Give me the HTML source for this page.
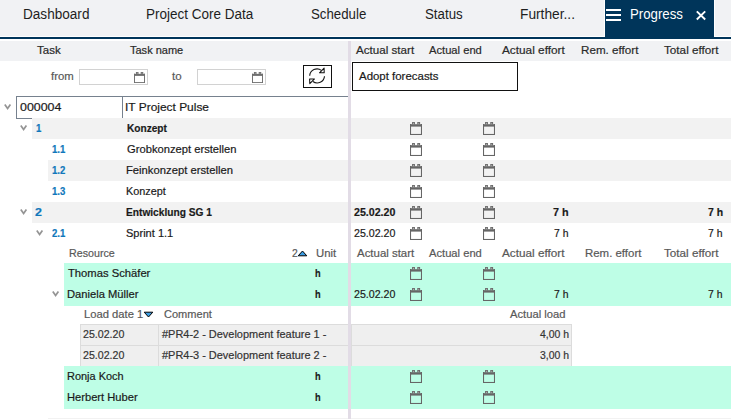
<!DOCTYPE html>
<html><head><meta charset="utf-8"><style>
html,body{margin:0;padding:0;width:731px;height:419px;overflow:hidden;background:#fff;position:relative}
.t{position:absolute;font-family:"Liberation Sans",sans-serif;white-space:pre;transform-origin:0 0;}
.s{-webkit-text-stroke:0.2px currentColor}
.b{position:absolute}
svg{position:absolute;overflow:visible}
</style></head><body>
<div class="b" style="left:0px;top:0px;width:731px;height:36px;background:#f1f2f4;"></div>
<div class="b" style="left:0px;top:36px;width:731px;height:1px;background:#ffffff;"></div>
<div class="b" style="left:604px;top:0px;width:1px;height:36px;background:#ffffff;"></div>
<div class="b" style="left:714px;top:0px;width:1px;height:36px;background:#ffffff;"></div>
<div class="b" style="left:605px;top:0px;width:109px;height:37px;background:#00355a;"></div>
<div class="b" style="left:0px;top:37px;width:731px;height:2px;background:#00355a;"></div>
<div class="b" style="left:0px;top:41px;width:731px;height:20px;background:#f1f2f4;"></div>
<div class="b" style="left:606px;top:9px;width:14.5px;height:2px;background:#ffffff;"></div>
<div class="b" style="left:606px;top:14px;width:14.5px;height:2px;background:#ffffff;"></div>
<div class="b" style="left:606px;top:19px;width:14.5px;height:2px;background:#ffffff;"></div>
<svg style="left:696px;top:11px" width="10" height="10" viewBox="0 0 10 10"><path d="M0.8 0.4 L9.2 8.5 M9.2 0.4 L0.8 8.5" stroke="#fff" stroke-width="1.9"/></svg>
<div class="b" style="left:79px;top:69px;width:69px;height:16px;background:#fff;box-sizing:border-box;border:1px solid #d2d2d2"></div>
<svg style="left:134px;top:72px" width="11" height="11" viewBox="0 0 12 13" preserveAspectRatio="none"><g fill="#6e6e6e"><rect x="2.1" y="0" width="2.8" height="2.4"/><rect x="7.3" y="0" width="2.8" height="2.4"/><rect x="0" y="2.2" width="12" height="2.4"/><rect x="0" y="2" width="1.05" height="11"/><rect x="10.95" y="2" width="1.05" height="11"/><rect x="0" y="11.95" width="12" height="1.05"/></g><g fill="#aaa"><rect x="3" y="0.8" width="1" height="1.4"/><rect x="8.2" y="0.8" width="1" height="1.4"/></g></svg>
<div class="b" style="left:197px;top:69px;width:69px;height:16px;background:#fff;box-sizing:border-box;border:1px solid #d2d2d2"></div>
<svg style="left:252px;top:72px" width="11" height="11" viewBox="0 0 12 13" preserveAspectRatio="none"><g fill="#6e6e6e"><rect x="2.1" y="0" width="2.8" height="2.4"/><rect x="7.3" y="0" width="2.8" height="2.4"/><rect x="0" y="2.2" width="12" height="2.4"/><rect x="0" y="2" width="1.05" height="11"/><rect x="10.95" y="2" width="1.05" height="11"/><rect x="0" y="11.95" width="12" height="1.05"/></g><g fill="#aaa"><rect x="3" y="0.8" width="1" height="1.4"/><rect x="8.2" y="0.8" width="1" height="1.4"/></g></svg>
<div class="b" style="left:303px;top:65px;width:29px;height:23px;background:#fff;box-sizing:border-box;border:1px solid #111"></div>
<svg style="left:303px;top:65px" width="29" height="23" viewBox="0 0 29 23"><g fill="none" stroke="#1a1a1a" stroke-width="1.15"><path d="M6.7 10.8 A7.3 7.3 0 0 1 18.4 5.4"/><path d="M21.5 11.2 A7.3 7.3 0 0 1 9.9 16.5"/></g><g fill="#fff" stroke="#111" stroke-width="1.05" stroke-linejoin="round"><path d="M16.5 7.8 L21.2 7.8 L21.1 3.1 Z"/><path d="M6.6 13.9 L11.5 13.9 L6.8 18.6 Z"/></g></svg>
<div class="b" style="left:352px;top:62px;width:166px;height:29px;background:#fff;box-sizing:border-box;border:1px solid #111"></div>
<div class="b" style="left:16px;top:96px;width:333px;height:23px;background:#fff;box-sizing:border-box;border:1px solid #76818e;border-right:none"></div>
<div class="b" style="left:122px;top:97px;width:1px;height:21px;background:#76818e;"></div>
<svg style="left:4px;top:104px" width="8" height="7" viewBox="0 0 8 7"><path d="M0.8 0.5 L3.6 4.6 L6.4 0.5" fill="none" stroke="#949494" stroke-width="1.7"/></svg>
<div class="b" style="left:32px;top:118px;width:316px;height:21px;background:#f2f2f2;"></div>
<div class="b" style="left:351px;top:118px;width:380px;height:21px;background:#f2f2f2;"></div>
<div class="b" style="left:48px;top:160px;width:300px;height:21px;background:#f2f2f2;"></div>
<div class="b" style="left:351px;top:160px;width:380px;height:21px;background:#f2f2f2;"></div>
<div class="b" style="left:32px;top:202px;width:316px;height:21px;background:#f2f2f2;"></div>
<div class="b" style="left:351px;top:202px;width:380px;height:21px;background:#f2f2f2;"></div>
<svg style="left:20px;top:125px" width="8" height="7" viewBox="0 0 8 7"><path d="M0.8 0.5 L3.6 4.6 L6.4 0.5" fill="none" stroke="#949494" stroke-width="1.7"/></svg>
<svg style="left:20px;top:209px" width="8" height="7" viewBox="0 0 8 7"><path d="M0.8 0.5 L3.6 4.6 L6.4 0.5" fill="none" stroke="#949494" stroke-width="1.7"/></svg>
<svg style="left:36px;top:230px" width="8" height="7" viewBox="0 0 8 7"><path d="M0.8 0.5 L3.6 4.6 L6.4 0.5" fill="none" stroke="#949494" stroke-width="1.7"/></svg>
<svg style="left:410px;top:122px" width="12" height="13" viewBox="0 0 12 13" preserveAspectRatio="none"><g fill="#666666"><rect x="2.1" y="0" width="2.8" height="2.4"/><rect x="7.3" y="0" width="2.8" height="2.4"/><rect x="0" y="2.2" width="12" height="2.4"/><rect x="0" y="2" width="1.05" height="11"/><rect x="10.95" y="2" width="1.05" height="11"/><rect x="0" y="11.95" width="12" height="1.05"/></g><g fill="#aaa"><rect x="3" y="0.8" width="1" height="1.4"/><rect x="8.2" y="0.8" width="1" height="1.4"/></g></svg>
<svg style="left:483px;top:122px" width="12" height="13" viewBox="0 0 12 13" preserveAspectRatio="none"><g fill="#666666"><rect x="2.1" y="0" width="2.8" height="2.4"/><rect x="7.3" y="0" width="2.8" height="2.4"/><rect x="0" y="2.2" width="12" height="2.4"/><rect x="0" y="2" width="1.05" height="11"/><rect x="10.95" y="2" width="1.05" height="11"/><rect x="0" y="11.95" width="12" height="1.05"/></g><g fill="#aaa"><rect x="3" y="0.8" width="1" height="1.4"/><rect x="8.2" y="0.8" width="1" height="1.4"/></g></svg>
<svg style="left:410px;top:143px" width="12" height="13" viewBox="0 0 12 13" preserveAspectRatio="none"><g fill="#666666"><rect x="2.1" y="0" width="2.8" height="2.4"/><rect x="7.3" y="0" width="2.8" height="2.4"/><rect x="0" y="2.2" width="12" height="2.4"/><rect x="0" y="2" width="1.05" height="11"/><rect x="10.95" y="2" width="1.05" height="11"/><rect x="0" y="11.95" width="12" height="1.05"/></g><g fill="#aaa"><rect x="3" y="0.8" width="1" height="1.4"/><rect x="8.2" y="0.8" width="1" height="1.4"/></g></svg>
<svg style="left:483px;top:143px" width="12" height="13" viewBox="0 0 12 13" preserveAspectRatio="none"><g fill="#666666"><rect x="2.1" y="0" width="2.8" height="2.4"/><rect x="7.3" y="0" width="2.8" height="2.4"/><rect x="0" y="2.2" width="12" height="2.4"/><rect x="0" y="2" width="1.05" height="11"/><rect x="10.95" y="2" width="1.05" height="11"/><rect x="0" y="11.95" width="12" height="1.05"/></g><g fill="#aaa"><rect x="3" y="0.8" width="1" height="1.4"/><rect x="8.2" y="0.8" width="1" height="1.4"/></g></svg>
<svg style="left:410px;top:164px" width="12" height="13" viewBox="0 0 12 13" preserveAspectRatio="none"><g fill="#666666"><rect x="2.1" y="0" width="2.8" height="2.4"/><rect x="7.3" y="0" width="2.8" height="2.4"/><rect x="0" y="2.2" width="12" height="2.4"/><rect x="0" y="2" width="1.05" height="11"/><rect x="10.95" y="2" width="1.05" height="11"/><rect x="0" y="11.95" width="12" height="1.05"/></g><g fill="#aaa"><rect x="3" y="0.8" width="1" height="1.4"/><rect x="8.2" y="0.8" width="1" height="1.4"/></g></svg>
<svg style="left:483px;top:164px" width="12" height="13" viewBox="0 0 12 13" preserveAspectRatio="none"><g fill="#666666"><rect x="2.1" y="0" width="2.8" height="2.4"/><rect x="7.3" y="0" width="2.8" height="2.4"/><rect x="0" y="2.2" width="12" height="2.4"/><rect x="0" y="2" width="1.05" height="11"/><rect x="10.95" y="2" width="1.05" height="11"/><rect x="0" y="11.95" width="12" height="1.05"/></g><g fill="#aaa"><rect x="3" y="0.8" width="1" height="1.4"/><rect x="8.2" y="0.8" width="1" height="1.4"/></g></svg>
<svg style="left:410px;top:185px" width="12" height="13" viewBox="0 0 12 13" preserveAspectRatio="none"><g fill="#666666"><rect x="2.1" y="0" width="2.8" height="2.4"/><rect x="7.3" y="0" width="2.8" height="2.4"/><rect x="0" y="2.2" width="12" height="2.4"/><rect x="0" y="2" width="1.05" height="11"/><rect x="10.95" y="2" width="1.05" height="11"/><rect x="0" y="11.95" width="12" height="1.05"/></g><g fill="#aaa"><rect x="3" y="0.8" width="1" height="1.4"/><rect x="8.2" y="0.8" width="1" height="1.4"/></g></svg>
<svg style="left:483px;top:185px" width="12" height="13" viewBox="0 0 12 13" preserveAspectRatio="none"><g fill="#666666"><rect x="2.1" y="0" width="2.8" height="2.4"/><rect x="7.3" y="0" width="2.8" height="2.4"/><rect x="0" y="2.2" width="12" height="2.4"/><rect x="0" y="2" width="1.05" height="11"/><rect x="10.95" y="2" width="1.05" height="11"/><rect x="0" y="11.95" width="12" height="1.05"/></g><g fill="#aaa"><rect x="3" y="0.8" width="1" height="1.4"/><rect x="8.2" y="0.8" width="1" height="1.4"/></g></svg>
<svg style="left:410px;top:206px" width="12" height="13" viewBox="0 0 12 13" preserveAspectRatio="none"><g fill="#666666"><rect x="2.1" y="0" width="2.8" height="2.4"/><rect x="7.3" y="0" width="2.8" height="2.4"/><rect x="0" y="2.2" width="12" height="2.4"/><rect x="0" y="2" width="1.05" height="11"/><rect x="10.95" y="2" width="1.05" height="11"/><rect x="0" y="11.95" width="12" height="1.05"/></g><g fill="#aaa"><rect x="3" y="0.8" width="1" height="1.4"/><rect x="8.2" y="0.8" width="1" height="1.4"/></g></svg>
<svg style="left:483px;top:206px" width="12" height="13" viewBox="0 0 12 13" preserveAspectRatio="none"><g fill="#666666"><rect x="2.1" y="0" width="2.8" height="2.4"/><rect x="7.3" y="0" width="2.8" height="2.4"/><rect x="0" y="2.2" width="12" height="2.4"/><rect x="0" y="2" width="1.05" height="11"/><rect x="10.95" y="2" width="1.05" height="11"/><rect x="0" y="11.95" width="12" height="1.05"/></g><g fill="#aaa"><rect x="3" y="0.8" width="1" height="1.4"/><rect x="8.2" y="0.8" width="1" height="1.4"/></g></svg>
<svg style="left:410px;top:227px" width="12" height="13" viewBox="0 0 12 13" preserveAspectRatio="none"><g fill="#666666"><rect x="2.1" y="0" width="2.8" height="2.4"/><rect x="7.3" y="0" width="2.8" height="2.4"/><rect x="0" y="2.2" width="12" height="2.4"/><rect x="0" y="2" width="1.05" height="11"/><rect x="10.95" y="2" width="1.05" height="11"/><rect x="0" y="11.95" width="12" height="1.05"/></g><g fill="#aaa"><rect x="3" y="0.8" width="1" height="1.4"/><rect x="8.2" y="0.8" width="1" height="1.4"/></g></svg>
<svg style="left:483px;top:227px" width="12" height="13" viewBox="0 0 12 13" preserveAspectRatio="none"><g fill="#666666"><rect x="2.1" y="0" width="2.8" height="2.4"/><rect x="7.3" y="0" width="2.8" height="2.4"/><rect x="0" y="2.2" width="12" height="2.4"/><rect x="0" y="2" width="1.05" height="11"/><rect x="10.95" y="2" width="1.05" height="11"/><rect x="0" y="11.95" width="12" height="1.05"/></g><g fill="#aaa"><rect x="3" y="0.8" width="1" height="1.4"/><rect x="8.2" y="0.8" width="1" height="1.4"/></g></svg>
<div class="b" style="left:64px;top:263px;width:284px;height:43px;background:#befee6;"></div>
<div class="b" style="left:351px;top:263px;width:380px;height:43px;background:#befee6;"></div>
<svg style="left:410px;top:267px" width="12" height="13" viewBox="0 0 12 13" preserveAspectRatio="none"><g fill="#666666"><rect x="2.1" y="0" width="2.8" height="2.4"/><rect x="7.3" y="0" width="2.8" height="2.4"/><rect x="0" y="2.2" width="12" height="2.4"/><rect x="0" y="2" width="1.05" height="11"/><rect x="10.95" y="2" width="1.05" height="11"/><rect x="0" y="11.95" width="12" height="1.05"/></g><g fill="#aaa"><rect x="3" y="0.8" width="1" height="1.4"/><rect x="8.2" y="0.8" width="1" height="1.4"/></g></svg>
<svg style="left:483px;top:267px" width="12" height="13" viewBox="0 0 12 13" preserveAspectRatio="none"><g fill="#666666"><rect x="2.1" y="0" width="2.8" height="2.4"/><rect x="7.3" y="0" width="2.8" height="2.4"/><rect x="0" y="2.2" width="12" height="2.4"/><rect x="0" y="2" width="1.05" height="11"/><rect x="10.95" y="2" width="1.05" height="11"/><rect x="0" y="11.95" width="12" height="1.05"/></g><g fill="#aaa"><rect x="3" y="0.8" width="1" height="1.4"/><rect x="8.2" y="0.8" width="1" height="1.4"/></g></svg>
<svg style="left:410px;top:288px" width="12" height="13" viewBox="0 0 12 13" preserveAspectRatio="none"><g fill="#666666"><rect x="2.1" y="0" width="2.8" height="2.4"/><rect x="7.3" y="0" width="2.8" height="2.4"/><rect x="0" y="2.2" width="12" height="2.4"/><rect x="0" y="2" width="1.05" height="11"/><rect x="10.95" y="2" width="1.05" height="11"/><rect x="0" y="11.95" width="12" height="1.05"/></g><g fill="#aaa"><rect x="3" y="0.8" width="1" height="1.4"/><rect x="8.2" y="0.8" width="1" height="1.4"/></g></svg>
<svg style="left:483px;top:288px" width="12" height="13" viewBox="0 0 12 13" preserveAspectRatio="none"><g fill="#666666"><rect x="2.1" y="0" width="2.8" height="2.4"/><rect x="7.3" y="0" width="2.8" height="2.4"/><rect x="0" y="2.2" width="12" height="2.4"/><rect x="0" y="2" width="1.05" height="11"/><rect x="10.95" y="2" width="1.05" height="11"/><rect x="0" y="11.95" width="12" height="1.05"/></g><g fill="#aaa"><rect x="3" y="0.8" width="1" height="1.4"/><rect x="8.2" y="0.8" width="1" height="1.4"/></g></svg>
<div class="b" style="left:64px;top:366px;width:284px;height:43px;background:#befee6;"></div>
<div class="b" style="left:351px;top:366px;width:380px;height:43px;background:#befee6;"></div>
<svg style="left:410px;top:370px" width="12" height="13" viewBox="0 0 12 13" preserveAspectRatio="none"><g fill="#666666"><rect x="2.1" y="0" width="2.8" height="2.4"/><rect x="7.3" y="0" width="2.8" height="2.4"/><rect x="0" y="2.2" width="12" height="2.4"/><rect x="0" y="2" width="1.05" height="11"/><rect x="10.95" y="2" width="1.05" height="11"/><rect x="0" y="11.95" width="12" height="1.05"/></g><g fill="#aaa"><rect x="3" y="0.8" width="1" height="1.4"/><rect x="8.2" y="0.8" width="1" height="1.4"/></g></svg>
<svg style="left:483px;top:370px" width="12" height="13" viewBox="0 0 12 13" preserveAspectRatio="none"><g fill="#666666"><rect x="2.1" y="0" width="2.8" height="2.4"/><rect x="7.3" y="0" width="2.8" height="2.4"/><rect x="0" y="2.2" width="12" height="2.4"/><rect x="0" y="2" width="1.05" height="11"/><rect x="10.95" y="2" width="1.05" height="11"/><rect x="0" y="11.95" width="12" height="1.05"/></g><g fill="#aaa"><rect x="3" y="0.8" width="1" height="1.4"/><rect x="8.2" y="0.8" width="1" height="1.4"/></g></svg>
<svg style="left:410px;top:391px" width="12" height="13" viewBox="0 0 12 13" preserveAspectRatio="none"><g fill="#666666"><rect x="2.1" y="0" width="2.8" height="2.4"/><rect x="7.3" y="0" width="2.8" height="2.4"/><rect x="0" y="2.2" width="12" height="2.4"/><rect x="0" y="2" width="1.05" height="11"/><rect x="10.95" y="2" width="1.05" height="11"/><rect x="0" y="11.95" width="12" height="1.05"/></g><g fill="#aaa"><rect x="3" y="0.8" width="1" height="1.4"/><rect x="8.2" y="0.8" width="1" height="1.4"/></g></svg>
<svg style="left:483px;top:391px" width="12" height="13" viewBox="0 0 12 13" preserveAspectRatio="none"><g fill="#666666"><rect x="2.1" y="0" width="2.8" height="2.4"/><rect x="7.3" y="0" width="2.8" height="2.4"/><rect x="0" y="2.2" width="12" height="2.4"/><rect x="0" y="2" width="1.05" height="11"/><rect x="10.95" y="2" width="1.05" height="11"/><rect x="0" y="11.95" width="12" height="1.05"/></g><g fill="#aaa"><rect x="3" y="0.8" width="1" height="1.4"/><rect x="8.2" y="0.8" width="1" height="1.4"/></g></svg>
<svg style="left:52px;top:291px" width="8" height="7" viewBox="0 0 8 7"><path d="M0.8 0.5 L3.6 4.6 L6.4 0.5" fill="none" stroke="#949494" stroke-width="1.7"/></svg>
<svg style="left:297px;top:250px" width="11" height="7" viewBox="0 0 11 7"><path d="M1.2 5.8 L5.5 1 L9.8 5.8 Z" fill="#3b9de3" stroke="#000" stroke-width="1"/></svg>
<svg style="left:143px;top:311px" width="11" height="7" viewBox="0 0 11 7"><path d="M1.2 1.2 L5.5 6 L9.8 1.2 Z" fill="#3b9de3" stroke="#000" stroke-width="1"/></svg>
<div class="b" style="left:80px;top:324px;width:268px;height:42px;background:#efefef;box-sizing:border-box;border:1px solid #dcdcdc;border-right:none;border-bottom:none"></div>
<div class="b" style="left:351px;top:324px;width:221px;height:42px;background:#efefef;box-sizing:border-box;border:1px solid #dcdcdc;border-bottom:none"></div>
<div class="b" style="left:80px;top:345px;width:268px;height:1px;background:#dcdcdc;"></div>
<div class="b" style="left:351px;top:345px;width:221px;height:1px;background:#dcdcdc;"></div>
<div class="b" style="left:158px;top:324px;width:1px;height:42px;background:#dcdcdc;"></div>
<div class="b" style="left:48px;top:418px;width:300px;height:1px;background:#f2f2f2;"></div>
<div class="b" style="left:351px;top:418px;width:380px;height:1px;background:#f2f2f2;"></div>
<div class="b" style="left:348px;top:41px;width:3px;height:378px;background:#e2dce6;"></div>
<div class="t" style="left:23.03px;top:7px;font-size:14px;line-height:14px;color:#1e1e1e;transform:scaleX(0.9701)">Dashboard</div>
<div class="t" style="left:146.04px;top:7px;font-size:14px;line-height:14px;color:#1e1e1e;transform:scaleX(0.9640)">Project Core Data</div>
<div class="t" style="left:311.05px;top:7px;font-size:14px;line-height:14px;color:#1e1e1e;transform:scaleX(0.9474)">Schedule</div>
<div class="t" style="left:425.05px;top:7px;font-size:14px;line-height:14px;color:#1e1e1e;transform:scaleX(0.9487)">Status</div>
<div class="t" style="left:520.02px;top:7px;font-size:14px;line-height:14px;color:#1e1e1e;transform:scaleX(0.9815)">Further...</div>
<div class="t" style="left:630.05px;top:7px;font-size:14px;line-height:14px;color:#ffffff;transform:scaleX(0.9455)">Progress</div>
<div class="t s" style="left:37.00px;top:45px;font-size:11.5px;line-height:11.5px;color:#2a2a2a;transform:scaleX(1.0000)">Task</div>
<div class="t s" style="left:130.00px;top:45px;font-size:11.5px;line-height:11.5px;color:#2a2a2a;transform:scaleX(0.9571)">Task name</div>
<div class="t s" style="left:356.00px;top:45px;font-size:11.5px;line-height:11.5px;color:#2a2a2a;transform:scaleX(1.0103)">Actual start</div>
<div class="t s" style="left:429.00px;top:45px;font-size:11.5px;line-height:11.5px;color:#2a2a2a;transform:scaleX(0.9722)">Actual end</div>
<div class="t s" style="left:502.00px;top:45px;font-size:11.5px;line-height:11.5px;color:#2a2a2a;transform:scaleX(1.0262)">Actual effort</div>
<div class="t s" style="left:580.99px;top:45px;font-size:11.5px;line-height:11.5px;color:#2a2a2a;transform:scaleX(1.0125)">Rem. effort</div>
<div class="t s" style="left:664.00px;top:45px;font-size:11.5px;line-height:11.5px;color:#2a2a2a;transform:scaleX(1.0185)">Total effort</div>
<div class="t s" style="left:51.00px;top:71px;font-size:11.5px;line-height:11.5px;color:#585858;transform:scaleX(0.9870)">from</div>
<div class="t s" style="left:172.00px;top:71px;font-size:11.5px;line-height:11.5px;color:#585858;transform:scaleX(1.0000)">to</div>
<div class="t s" style="left:359.00px;top:71px;font-size:11.5px;line-height:11.5px;color:#1a1a1a;transform:scaleX(0.9950)">Adopt forecasts</div>
<div class="t s" style="left:19.50px;top:102px;font-size:11.5px;line-height:11.5px;color:#1a1a1a;transform:scaleX(1.0789)">000004</div>
<div class="t s" style="left:124.96px;top:102px;font-size:11.5px;line-height:11.5px;color:#1a1a1a;transform:scaleX(1.0375)">IT Project Pulse</div>
<div class="t s" style="left:36.00px;top:123px;font-size:11.5px;line-height:11.5px;font-weight:bold;color:#1077bb;transform:scaleX(0.8333)">1</div>
<div class="t s" style="left:127.00px;top:123px;font-size:11.5px;line-height:11.5px;font-weight:bold;color:#1a1a1a;transform:scaleX(0.8804)">Konzept</div>
<div class="t s" style="left:52.00px;top:144px;font-size:11.5px;line-height:11.5px;font-weight:bold;color:#1077bb;transform:scaleX(0.8313)">1.1</div>
<div class="t s" style="left:127.00px;top:144px;font-size:11.5px;line-height:11.5px;color:#1a1a1a;transform:scaleX(0.9732)">Grobkonzept erstellen</div>
<div class="t s" style="left:52.00px;top:165px;font-size:11.5px;line-height:11.5px;font-weight:bold;color:#1077bb;transform:scaleX(0.8313)">1.2</div>
<div class="t s" style="left:126.02px;top:165px;font-size:11.5px;line-height:11.5px;color:#1a1a1a;transform:scaleX(0.9778)">Feinkonzept erstellen</div>
<div class="t s" style="left:52.00px;top:186px;font-size:11.5px;line-height:11.5px;font-weight:bold;color:#1077bb;transform:scaleX(0.8313)">1.3</div>
<div class="t s" style="left:126.06px;top:186px;font-size:11.5px;line-height:11.5px;color:#1a1a1a;transform:scaleX(0.9439)">Konzept</div>
<div class="t s" style="left:35.00px;top:207px;font-size:11.5px;line-height:11.5px;font-weight:bold;color:#1077bb;transform:scaleX(1.0833)">2</div>
<div class="t s" style="left:126.00px;top:207px;font-size:11.5px;line-height:11.5px;font-weight:bold;color:#1a1a1a;transform:scaleX(0.8845)">Entwicklung SG 1</div>
<div class="t s" style="left:354.00px;top:207px;font-size:11.5px;line-height:11.5px;font-weight:bold;color:#1a1a1a;transform:scaleX(0.9244)">25.02.20</div>
<div class="t s" style="left:553.00px;top:207px;font-size:11.5px;line-height:11.5px;font-weight:bold;color:#1a1a1a;transform:scaleX(0.9375)">7 h</div>
<div class="t s" style="left:707.50px;top:207px;font-size:11.5px;line-height:11.5px;font-weight:bold;color:#1a1a1a;transform:scaleX(0.9062)">7 h</div>
<div class="t s" style="left:52.00px;top:228px;font-size:11.5px;line-height:11.5px;font-weight:bold;color:#1077bb;transform:scaleX(0.8313)">2.1</div>
<div class="t s" style="left:126.00px;top:228px;font-size:11.5px;line-height:11.5px;color:#1a1a1a;transform:scaleX(0.9592)">Sprint 1.1</div>
<div class="t s" style="left:354.00px;top:228px;font-size:11.5px;line-height:11.5px;color:#1a1a1a;transform:scaleX(0.9244)">25.02.20</div>
<div class="t s" style="left:553.50px;top:228px;font-size:11.5px;line-height:11.5px;color:#1a1a1a;transform:scaleX(0.9062)">7 h</div>
<div class="t s" style="left:707.50px;top:228px;font-size:11.5px;line-height:11.5px;color:#1a1a1a;transform:scaleX(0.9062)">7 h</div>
<div class="t s" style="left:69.07px;top:248px;font-size:11.5px;line-height:11.5px;color:#585858;transform:scaleX(0.9300)">Resource</div>
<div class="t s" style="left:292.00px;top:248px;font-size:11.5px;line-height:11.5px;color:#585858;transform:scaleX(0.9000)">2</div>
<div class="t s" style="left:316.01px;top:248px;font-size:11.5px;line-height:11.5px;color:#585858;transform:scaleX(0.9850)">Unit</div>
<div class="t s" style="left:356.50px;top:248px;font-size:11.5px;line-height:11.5px;color:#585858;transform:scaleX(0.9948)">Actual start</div>
<div class="t s" style="left:429.30px;top:248px;font-size:11.5px;line-height:11.5px;color:#585858;transform:scaleX(0.9722)">Actual end</div>
<div class="t s" style="left:502.00px;top:248px;font-size:11.5px;line-height:11.5px;color:#585858;transform:scaleX(1.0213)">Actual effort</div>
<div class="t s" style="left:584.71px;top:248px;font-size:11.5px;line-height:11.5px;color:#585858;transform:scaleX(0.9946)">Rem. effort</div>
<div class="t s" style="left:663.60px;top:248px;font-size:11.5px;line-height:11.5px;color:#585858;transform:scaleX(1.0167)">Total effort</div>
<div class="t s" style="left:67.50px;top:268px;font-size:11.5px;line-height:11.5px;color:#1a1a1a;transform:scaleX(0.9762)">Thomas Schäfer</div>
<div class="t s" style="left:315.00px;top:268px;font-size:11.5px;line-height:11.5px;font-weight:bold;color:#1a1a1a;transform:scaleX(0.8000)">h</div>
<div class="t s" style="left:66.53px;top:289px;font-size:11.5px;line-height:11.5px;color:#1a1a1a;transform:scaleX(0.9726)">Daniela Müller</div>
<div class="t s" style="left:315.00px;top:289px;font-size:11.5px;line-height:11.5px;font-weight:bold;color:#1a1a1a;transform:scaleX(0.8000)">h</div>
<div class="t s" style="left:66.55px;top:371px;font-size:11.5px;line-height:11.5px;color:#1a1a1a;transform:scaleX(0.9517)">Ronja Koch</div>
<div class="t s" style="left:315.00px;top:371px;font-size:11.5px;line-height:11.5px;font-weight:bold;color:#1a1a1a;transform:scaleX(0.8000)">h</div>
<div class="t s" style="left:66.53px;top:392px;font-size:11.5px;line-height:11.5px;color:#1a1a1a;transform:scaleX(0.9694)">Herbert Huber</div>
<div class="t s" style="left:315.00px;top:392px;font-size:11.5px;line-height:11.5px;font-weight:bold;color:#1a1a1a;transform:scaleX(0.8000)">h</div>
<div class="t s" style="left:354.00px;top:289px;font-size:11.5px;line-height:11.5px;color:#1a1a1a;transform:scaleX(0.9244)">25.02.20</div>
<div class="t s" style="left:553.50px;top:289px;font-size:11.5px;line-height:11.5px;color:#1a1a1a;transform:scaleX(0.9062)">7 h</div>
<div class="t s" style="left:707.50px;top:289px;font-size:11.5px;line-height:11.5px;color:#1a1a1a;transform:scaleX(0.9062)">7 h</div>
<div class="t s" style="left:84.03px;top:309px;font-size:11.5px;line-height:11.5px;color:#585858;transform:scaleX(0.9746)">Load date 1</div>
<div class="t s" style="left:164.00px;top:309px;font-size:11.5px;line-height:11.5px;color:#585858;transform:scaleX(0.9600)">Comment</div>
<div class="t s" style="left:510.00px;top:309px;font-size:11.5px;line-height:11.5px;color:#585858;transform:scaleX(0.9737)">Actual load</div>
<div class="t s" style="left:83.40px;top:329px;font-size:11.5px;line-height:11.5px;color:#333;transform:scaleX(0.9244)">25.02.20</div>
<div class="t s" style="left:161.50px;top:329px;font-size:11.5px;line-height:11.5px;color:#333;transform:scaleX(0.9523)">#PR4-2 - Development feature 1 -</div>
<div class="t s" style="left:540.00px;top:329px;font-size:11.5px;line-height:11.5px;color:#333;transform:scaleX(0.9062)">4,00 h</div>
<div class="t s" style="left:83.40px;top:350px;font-size:11.5px;line-height:11.5px;color:#333;transform:scaleX(0.9244)">25.02.20</div>
<div class="t s" style="left:161.50px;top:350px;font-size:11.5px;line-height:11.5px;color:#333;transform:scaleX(0.9523)">#PR4-3 - Development feature 2 -</div>
<div class="t s" style="left:540.00px;top:350px;font-size:11.5px;line-height:11.5px;color:#333;transform:scaleX(0.9062)">3,00 h</div>
</body></html>
